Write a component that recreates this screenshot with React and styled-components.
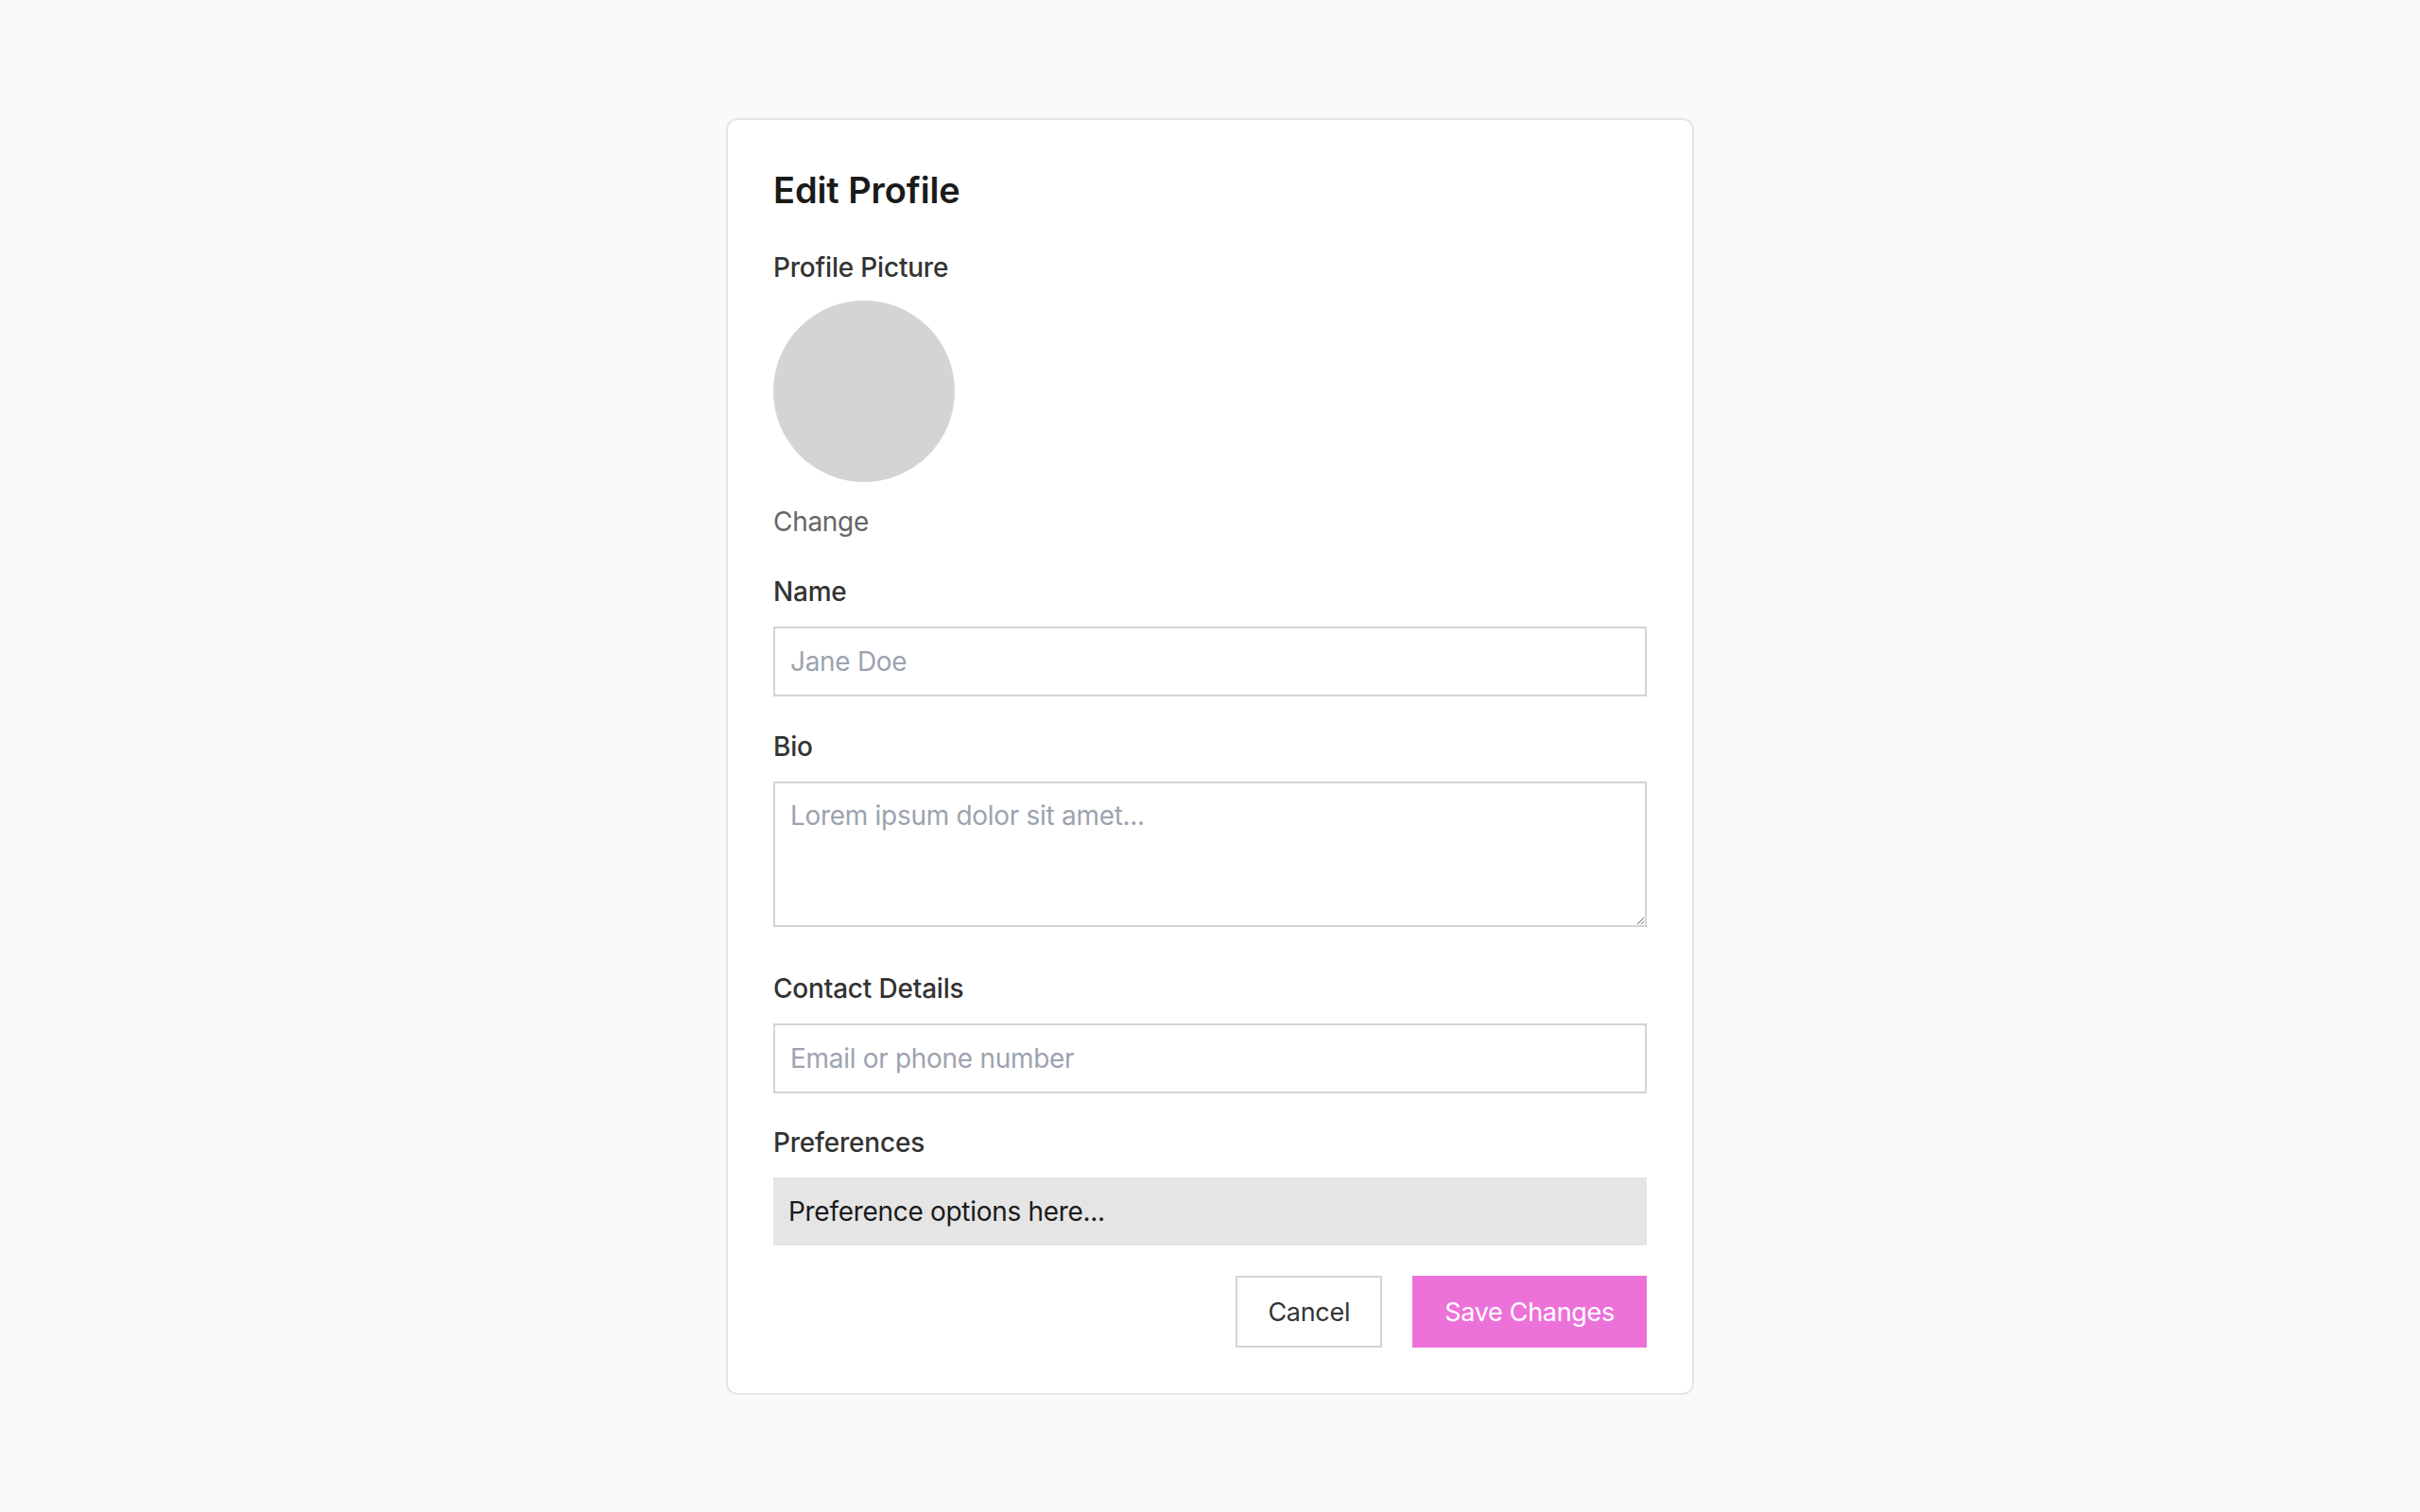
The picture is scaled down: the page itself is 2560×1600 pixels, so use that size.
import React from "react";
import styled, { createGlobalStyle } from "styled-components";

const Global = createGlobalStyle`
  * { box-sizing: border-box; }
  html, body { margin: 0; padding: 0; }
  body {
    background: #fafafa;
    font-family: Inter, "Noto Sans", "Liberation Sans", sans-serif;
    color: #1a1a1a;
  }
`;

const Page = styled.div`
  min-height: 1600px;
  padding-top: 125px;
`;

const Card = styled.form`
  width: 1024px;
  margin: 0 auto;
  background: #ffffff;
  border: 2px solid #e5e5e5;
  border-radius: 12px;
  padding: 48px;
`;

const Title = styled.h1`
  margin: 0 0 36px;
  font-size: 38px;
  line-height: 52px;
  font-weight: 600;
  color: #1a1a1a;
  letter-spacing: -0.1px;
`;

const Field = styled.div`
  margin-bottom: ${(p) => p.$gap}px;
`;

const Label = styled.label`
  display: block;
  font-size: 28px;
  line-height: 40px;
  font-weight: 500;
  letter-spacing: -0.2px;
  color: #333333;
  margin-bottom: ${(p) => (p.$tight ? 15 : 17)}px;
`;

const Avatar = styled.div`
  width: 192px;
  height: 192px;
  border-radius: 50%;
  background: #d4d4d4;
`;

const ChangeLink = styled.div`
  margin-top: 22px;
  font-size: 28px;
  line-height: 40px;
  letter-spacing: -0.3px;
  color: #666666;
  cursor: pointer;
`;

const fieldBase = `
  display: block;
  width: 100%;
  border: 2px solid #d4d4d4;
  border-radius: 0;
  background: #ffffff;
  font-family: Inter, "Noto Sans", "Liberation Sans", sans-serif;
  font-size: 28px;
  letter-spacing: -0.3px;
  color: #1a1a1a;
  outline: none;
  &::placeholder { color: #9ca3af; }
`;

const Input = styled.input`
  ${fieldBase}
  height: 74px;
  padding: 0 16px;
`;

const TextArea = styled.textarea`
  ${fieldBase}
  height: 154px;
  padding: 14px 16px;
  line-height: 40px;
  resize: both;
`;

const PrefBox = styled.div`
  height: 72px;
  display: flex;
  align-items: center;
  padding: 0 16px;
  background: #e5e5e5;
  font-size: 28px;
  letter-spacing: -0.3px;
  color: #1a1a1a;
`;

const Actions = styled.div`
  display: flex;
  justify-content: flex-end;
  gap: 32px;
`;

const Button = styled.button`
  height: 76px;
  padding: 0 32px;
  font-family: Inter, "Noto Sans", "Liberation Sans", sans-serif;
  font-size: 27px;
  letter-spacing: -0.3px;
  border-radius: 0;
  cursor: pointer;
  border: 2px solid ${(p) => (p.$primary ? "#ec72da" : "#d4d4d4")};
  background: ${(p) => (p.$primary ? "#ec72da" : "#ffffff")};
  color: ${(p) => (p.$primary ? "#ffffff" : "#333333")};
`;

export default function App() {
  return (
    <>
      <Global />
      <Page>
        <Card onSubmit={(e) => e.preventDefault()}>
          <Title>Edit Profile</Title>
          <Field $gap={34}>
            <Label $tight>Profile Picture</Label>
            <Avatar />
            <ChangeLink>Change</ChangeLink>
          </Field>
          <Field $gap={33}>
            <Label>Name</Label>
            <Input placeholder="Jane Doe" />
          </Field>
          <Field $gap={45}>
            <Label>Bio</Label>
            <TextArea placeholder="Lorem ipsum dolor sit amet..." />
          </Field>
          <Field $gap={32}>
            <Label>Contact Details</Label>
            <Input placeholder="Email or phone number" />
          </Field>
          <Field $gap={32}>
            <Label>Preferences</Label>
            <PrefBox>Preference options here...</PrefBox>
          </Field>
          <Actions>
            <Button type="button">Cancel</Button>
            <Button type="submit" $primary>Save Changes</Button>
          </Actions>
        </Card>
      </Page>
    </>
  );
}
